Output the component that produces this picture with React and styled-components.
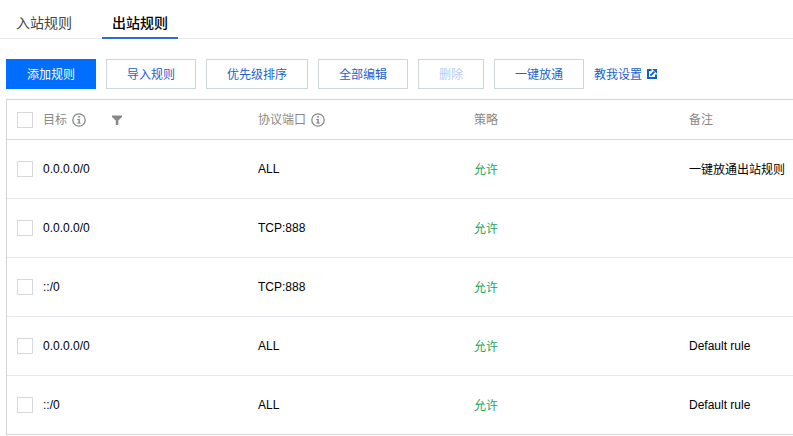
import React from "react";
import styled, { createGlobalStyle } from "styled-components";

const GlobalStyle = createGlobalStyle`
  html, body {
    margin: 0;
    padding: 0;
    background: #fff;
    overflow: hidden;
  }
  body {
    font-family: "Liberation Sans", "Noto Sans CJK SC", sans-serif;
    font-size: 12px;
    color: #000;
  }
`;

const rows = [
  { target: "0.0.0.0/0", port: "ALL", note: "一键放通出站规则", cjkNote: true },
  { target: "0.0.0.0/0", port: "TCP:888", note: "" },
  { target: "::/0", port: "TCP:888", note: "" },
  { target: "0.0.0.0/0", port: "ALL", note: "Default rule" },
  { target: "::/0", port: "ALL", note: "Default rule" },
];

function InfoIcon() {
  return (
    <svg width="14" height="14" viewBox="0 0 14 14" fill="none">
      <circle cx="7" cy="7" r="6.2" stroke="#888" strokeWidth="1.3" />
      <rect x="6.3" y="3" width="1.5" height="1.6" fill="#777" />
      <path d="M5.4 5.9h2.3v3.6h1v1H5.4v-1h1V6.9h-1z" fill="#777" />
    </svg>
  );
}

function FilterIcon() {
  return (
    <svg width="10" height="10" viewBox="0 0 10 10">
      <path d="M0 0.5h10v1.6L6.3 5.4V10H3.8V5.4L0 2.1z" fill="#888" />
    </svg>
  );
}

function ExternalIcon() {
  return (
    <svg width="10" height="10" viewBox="0 0 10 10" fill="none">
      <path d="M4.5 1H1v8h8V5.5" stroke="#0a5fd6" strokeWidth="2" />
      <path d="M5.2 0H10v4.8z" fill="#0a5fd6" />
      <path d="M3.4 6.6L7.4 2.6" stroke="#0a5fd6" strokeWidth="1.8" />
    </svg>
  );
}

export default function App() {
  return (
    <Page>
      <GlobalStyle />
      <Tabs>
        <Tab>入站规则</Tab>
        <Tab $active>出站规则</Tab>
      </Tabs>
      <Toolbar>
        <Button $primary $width={90}>添加规则</Button>
        <Button $width={90}>导入规则</Button>
        <Button $width={102}>优先级排序</Button>
        <Button $width={90}>全部编辑</Button>
        <Button $width={66} $disabled>删除</Button>
        <Button $width={90}>一键放通</Button>
        <HelpLink>
          <CjkText>教我设置</CjkText>
          <ExternalIcon />
        </HelpLink>
      </Toolbar>
      <Table>
        <HeadRow>
          <FirstCell>
            <Checkbox />
            <HeadLabel>目标</HeadLabel>
            <InfoIcon />
            <FilterSlot>
              <FilterIcon />
            </FilterSlot>
          </FirstCell>
          <Cell>
            <HeadLabel>协议端口</HeadLabel>
            <InfoIcon />
          </Cell>
          <Cell>
            <HeadLabel>策略</HeadLabel>
          </Cell>
          <Cell>
            <HeadLabel>备注</HeadLabel>
          </Cell>
        </HeadRow>
        {rows.map((row, i) => (
          <Row key={i}>
            <FirstCell>
              <Checkbox />
              <span>{row.target}</span>
            </FirstCell>
            <Cell>{row.port}</Cell>
            <Cell>
              <Allow>允许</Allow>
            </Cell>
            <Cell>{row.cjkNote ? <CjkText>{row.note}</CjkText> : row.note}</Cell>
          </Row>
        ))}
      </Table>
    </Page>
  );
}

const Page = styled.div`
  width: 793px;
  height: 436px;
  overflow: hidden;
  padding-left: 6px;
  box-sizing: border-box;
`;

const Tabs = styled.div`
  display: flex;
  height: 39px;
  box-sizing: border-box;
  border-bottom: 1px solid #e7eaef;
  gap: 10px;
  margin-left: -6px;
  padding-left: 2px;
`;

const Tab = styled.div`
  width: ${(props) => (props.$active ? "76px" : "84px")};
  box-sizing: border-box;
  height: 39px;
  padding-top: 14px;
  padding-left: ${(props) => (props.$active ? "10px" : "14px")};
  font-size: 14px;
  line-height: 18px;
  margin-left: ${(props) => (props.$active ? "6px" : "0")};
  color: ${(props) => (props.$active ? "#000" : "#444")};
  font-weight: ${(props) => (props.$active ? 500 : 400)};
  border-bottom: ${(props) => (props.$active ? "2px solid #2a6fca" : "none")};
`;

const Toolbar = styled.div`
  display: flex;
  align-items: center;
  gap: 10px;
  margin-top: 20px;
  height: 30px;
`;

const Button = styled.div`
  width: ${(props) => props.$width}px;
  height: 30px;
  box-sizing: border-box;
  padding-bottom: 2px;
  display: flex;
  align-items: center;
  justify-content: center;
  background: ${(props) => (props.$primary ? "#006eff" : "#fff")};
  border: 1px solid ${(props) => (props.$primary ? "#006eff" : "#cfd5de")};
  color: ${(props) =>
    props.$primary ? "#fff" : props.$disabled ? "#b5cdf3" : "#1a62d0"};
`;

const CjkText = styled.span`
  padding-bottom: 2px;
`;

const HelpLink = styled.div`
  display: flex;
  align-items: center;
  gap: 5px;
  color: #1a5fc8;
`;

const Table = styled.div`
  margin-top: 10px;
  width: 900px;
  border: 1px solid #d4d4d4;
  border-right: none;
`;

const HeadRow = styled.div`
  display: grid;
  grid-template-columns: 251px 216px 215px 1fr;
  height: 40px;
  border-bottom: 1px solid #d8d8d8;
  box-sizing: border-box;
`;

const Row = styled(HeadRow)`
  height: 59px;
  border-bottom: 1px solid #e4e7ec;

  &:last-child {
    border-bottom: none;
    height: 58px;
  }
`;

const Cell = styled.div`
  display: flex;
  align-items: center;
  gap: 5px;
  white-space: nowrap;
`;

const FirstCell = styled(Cell)`
  padding-left: 10px;
`;

const Checkbox = styled.span`
  width: 16px;
  height: 16px;
  box-sizing: border-box;
  border: 1px solid #d6d8dc;
  background: #fff;
  margin-right: 5px;
  flex: none;
`;

const HeadLabel = styled.span`
  color: #888;
  padding-bottom: 2px;
`;

const FilterSlot = styled.span`
  display: flex;
  margin-left: 21px;
`;

const Allow = styled.span`
  color: #29a35a;
  padding-bottom: 2px;
`;
